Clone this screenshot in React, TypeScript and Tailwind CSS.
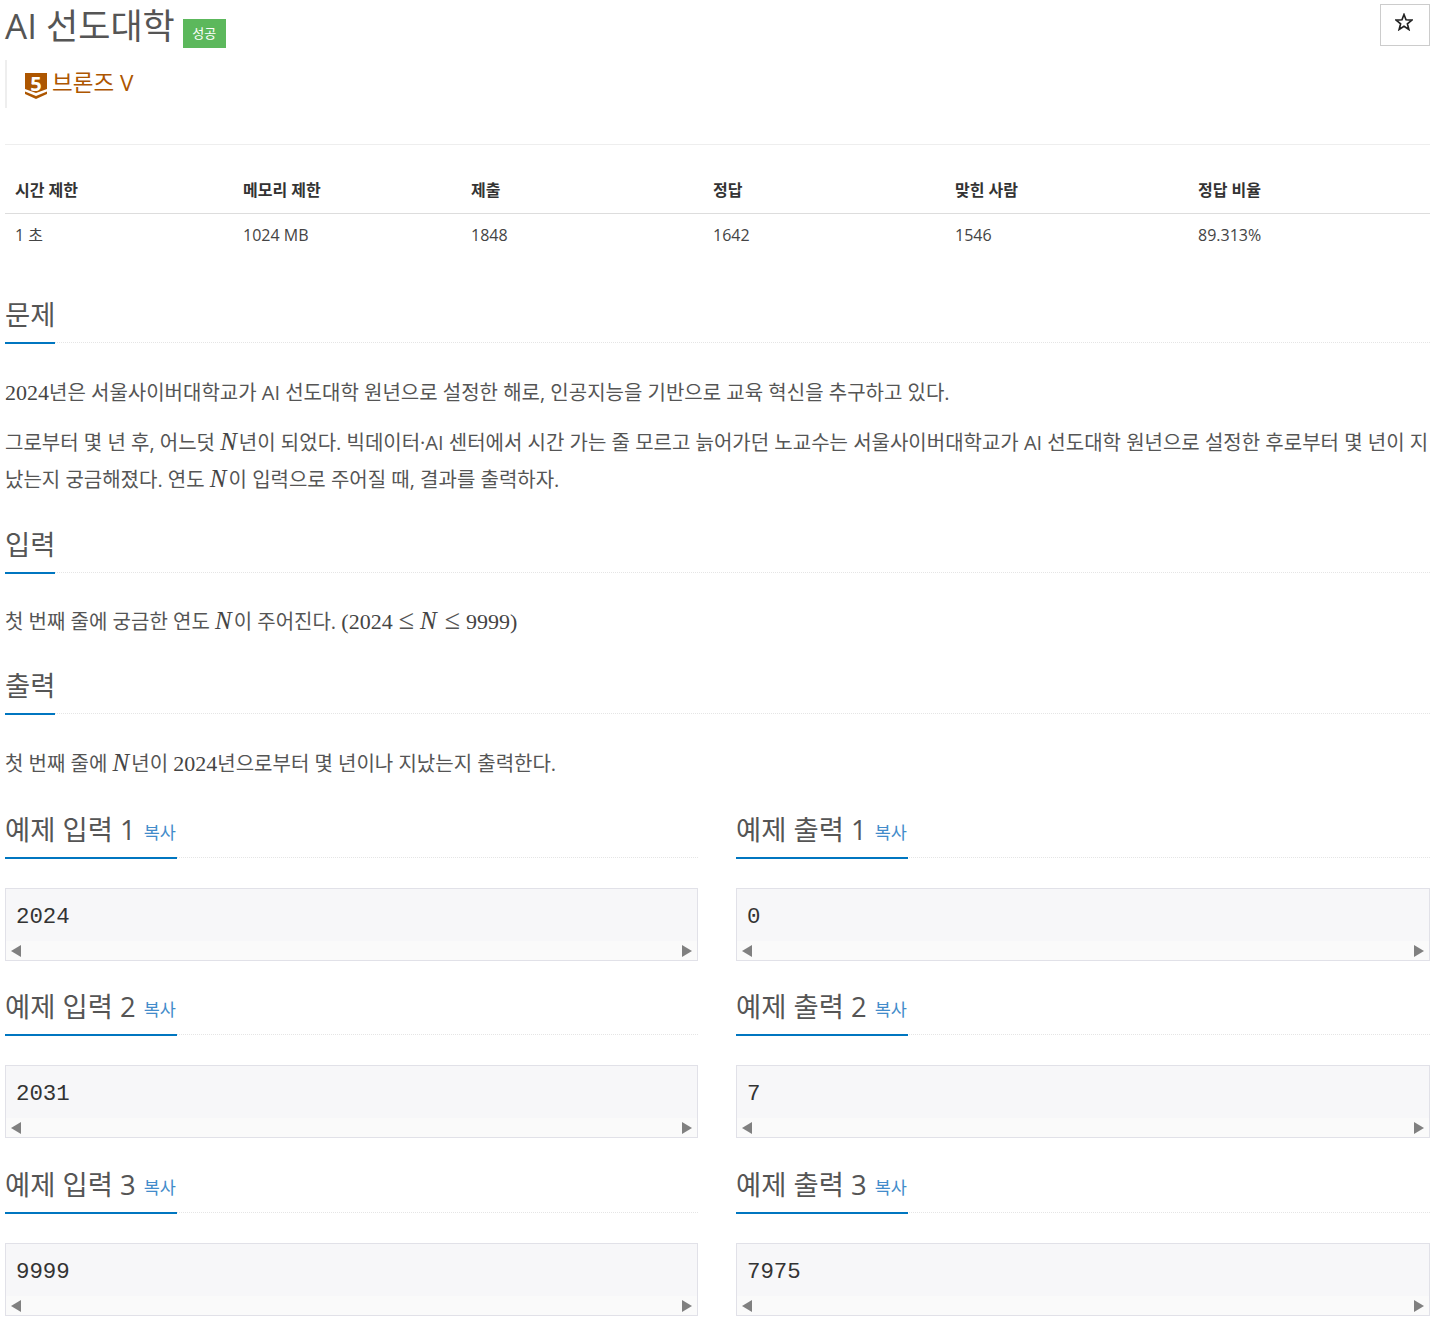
const sans = "font-['Open_Sans','Noto_Sans_CJK_KR',sans-serif]";

function M({ children }: { children: React.ReactNode }) {
  return <span className="font-['Liberation_Serif',serif] text-[22px] text-[#444]">{children}</span>;
}

function N() {
  return <span className="font-['Liberation_Serif',serif] text-[25px] italic leading-[20px] pr-[2px] text-[#444]">N</span>;
}

function Le() {
  return <span className="font-['Liberation_Serif',serif] text-[28px] leading-[20px] mx-[6px]">≤</span>;
}

function Headline({ title, copy, mt }: { title: string; copy?: boolean; mt: string }) {
  return (
    <div className={`${mt} border-b border-dotted border-[#e5e5e5] h-[42px] flex`}>
      <div className="border-b-2 border-[#0076c0] h-[43px] flex items-start gap-[8px] text-[#555] text-[27.4px] leading-[28px]">
        <h2 className="font-normal">{title}</h2>
        {copy && <span className="text-[17.5px] leading-[33px] pr-[1px] text-[#428bca]">복사</span>}
      </div>
    </div>
  );
}

function Sample({ title, value, mt }: { title: string; value: string; mt: string }) {
  return (
    <div>
      <Headline title={title} copy mt={mt} />
      <div className="mt-[30px] border border-[#e1e1e8] bg-[#f7f7f9] h-[73px] flex flex-col">
        <pre className="h-[52px] px-[10px] pt-[13px] font-['Liberation_Mono',monospace] text-[22.4px] leading-[30px] text-[#333]">{value}</pre>
        <div className="h-[19px] bg-[#fafafa] flex items-center justify-between px-[5px]">
          <svg width="10" height="12" viewBox="0 0 10 12"><path d="M10 0V12L0 6Z" fill="#808080" /></svg>
          <svg width="10" height="12" viewBox="0 0 10 12"><path d="M0 0V12L10 6Z" fill="#808080" /></svg>
        </div>
      </div>
    </div>
  );
}

const stats = [
  ["시간 제한", "1 초", "w-[228px]"],
  ["메모리 제한", "1024 MB", "w-[228px]"],
  ["제출", "1848", "w-[242px]"],
  ["정답", "1642", "w-[242px]"],
  ["맞힌 사람", "1546", "w-[243px]"],
  ["정답 비율", "89.313%", "w-[232px]"],
];

const samples = [
  ["1", "2024", "0", "mt-[34px]"],
  ["2", "2031", "7", "mt-[32px]"],
  ["3", "9999", "7975", "mt-[33px]"],
];

export default function App() {
  return (
    <div className={`${sans} bg-white pl-[5px] pr-[3px] h-[1321px] overflow-hidden text-[#333]`}>
      <div className="flex items-start justify-between h-[60px]">
        <div className="flex items-start pt-[4px]">
          <h1 className="text-[#555] text-[35px] leading-[44px] font-normal">AI 선도대학</h1>
          <span className="ml-[8px] mt-[15px] bg-[#5cb85c] text-white text-[13px] w-[43px] h-[29px] flex items-center justify-center">성공</span>
        </div>
        <button className="mt-[4px] w-[50px] h-[42px] border border-[#ccc] flex items-center justify-center">
          <svg width="18" height="18" viewBox="0 0 24 24" fill="none" stroke="#222" strokeWidth="2.2" className="-mt-[6px] -ml-[2px]">
            <path d="M12 2l2.7 7 7.8.5-6 4.9 2 7.6-6.500-4.300L5.500 22l2-7.600-6-4.900 7.800-.5z" />
          </svg>
        </button>
      </div>

      <div className="border-l-2 border-[#eee] h-[48px] pl-[18px] flex items-start pt-[7px]">
        <div className="flex items-center gap-[5px] text-[#ad5600] text-[22.5px] leading-[30px]">
          <svg width="22" height="26" viewBox="0 0 22 26" className="mt-[6px] overflow-visible">
            <path d="M0 0H22V16L11 20L0 16Z" fill="#ad5600" />
            <path d="M0 18.500L11 23L22 18.500V21L11 26L0 21Z" fill="#ad5600" />
            <text x="11" y="17.500" textAnchor="middle" fontSize="20" fontWeight="700" fill="#fff" fontFamily="Open Sans, sans-serif">5</text>
          </svg>
          <span>브론즈 V</span>
        </div>
      </div>

      <div className="mt-[36px] border-t border-[#eee]" />

      <div className="mt-[33px] text-[16px]">
        <div className="flex border-b border-[#ddd] h-[36px]">
          {stats.map((s) => (
            <div key={s[0]} className={`${s[2]} px-[10px] font-bold leading-[25px]`}>{s[0]}</div>
          ))}
        </div>
        <div className="flex h-[41px] items-center">
          {stats.map((s) => (
            <div key={s[0]} className={`${s[2]} px-[10px] text-[#444]`}>{s[1]}</div>
          ))}
        </div>
      </div>

      <Headline title="문제" mt="mt-[46px]" />
      <div className="text-[20px] leading-[37px] text-[#555]">
        <p className="mt-[31px]"><M>2024</M>년은 서울사이버대학교가 AI 선도대학 원년으로 설정한 해로, 인공지능을 기반으로 교육 혁신을 추구하고 있다.</p>
        <p className="mt-[13px]">그로부터 몇 년 후, 어느덧 <N />년이 되었다. 빅데이터·AI 센터에서 시간 가는 줄 모르고 늙어가던 노교수는 서울사이버대학교가 AI 선도대학 원년으로 설정한 후로부터 몇 년이 지났는지 궁금해졌다. 연도 <N />이 입력으로 주어질 때, 결과를 출력하자.</p>
      </div>

      <Headline title="입력" mt="mt-[33px]" />
      <p className="mt-[30px] text-[20px] leading-[37px] text-[#555]">첫 번째 줄에 궁금한 연도 <N />이 주어진다. <M>(2024</M><Le /><N /><Le /><M>9999)</M></p>

      <Headline title="출력" mt="mt-[32px]" />
      <p className="mt-[31px] text-[20px] leading-[37px] text-[#555]">첫 번째 줄에 <N />년이 <M>2024</M>년으로부터 몇 년이나 지났는지 출력한다.</p>

      <div className="grid grid-cols-[693px_694px] justify-between">
        {samples.map((s) => (
          <div key={s[0]} className="contents">
            <Sample title={`예제 입력 ${s[0]}`} value={s[1]} mt={s[3]} />
            <Sample title={`예제 출력 ${s[0]}`} value={s[2]} mt={s[3]} />
          </div>
        ))}
      </div>
    </div>
  );
}
